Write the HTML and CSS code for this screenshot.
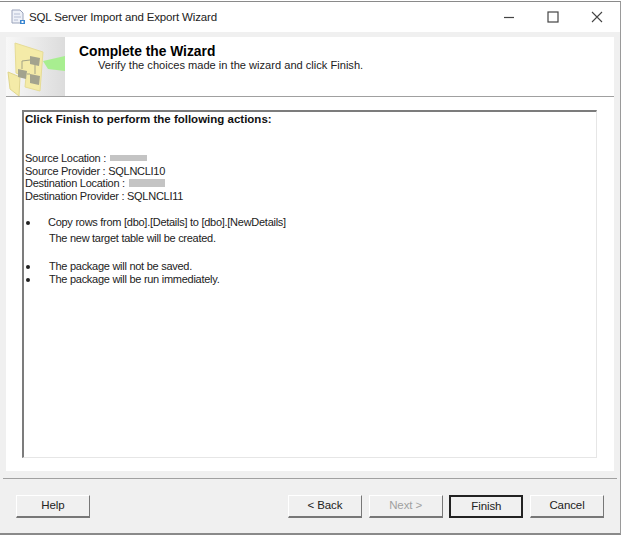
FILE: index.html
```html
<!DOCTYPE html>
<html lang="en">
<head>
<meta charset="utf-8">
<title>SQL Server Import and Export Wizard</title>
<link rel="stylesheet" href="styles.css">
</head>
<body>
<div class="window">
  <div class="titlebar">
    <svg class="app-icon" width="16" height="16" viewBox="0 0 16 16">
      <path d="M2 1h8l3 3v10H2z" fill="#eef1f8" stroke="#9aa3bb"/>
      <path d="M4 5h6M4 8h7M4 11h4" stroke="#b4bcd2"/>
      <rect x="10" y="11" width="5" height="4" fill="#3a86d0"/>
      <rect x="11.500" y="12" width="2" height="2" fill="#fff"/>
    </svg>
    <span class="title">SQL Server Import and Export Wizard</span>
    <div class="controls">
      <svg class="ctl" width="12" height="12" viewBox="0 0 12 12"><path d="M1 6.500h10" stroke="#444" stroke-width="1.200"/></svg>
      <svg class="ctl" width="12" height="12" viewBox="0 0 12 12"><rect x="1" y="1" width="10" height="10" fill="none" stroke="#444" stroke-width="1.200"/></svg>
      <svg class="ctl" width="12" height="12" viewBox="0 0 12 12"><path d="M1 1l10 10M11 1L1 11" stroke="#444" stroke-width="1.100"/></svg>
    </div>
  </div>
  <div class="panel">
    <div class="header">
      <div class="banner">
        <svg width="59" height="59" viewBox="0 0 59 59">
          <path d="M37 24l22-5v15l-17-2z" fill="#a8ee90"/>
          <path d="M9 6l28 9-3 39-15-4 1-10-10-4z" fill="#f4eba8" stroke="#e6dc96"/>
          <path d="M2 35l12 5-1 19-9-7z" fill="#f4eba8" stroke="#e0d68e"/>
          <path d="M16 32v-8l8-1M29 28v9M21 37h3" fill="none" stroke="#a3a386"/>
          <path d="M24 19l10 2-1 8-9-2z" fill="#a3a38e"/>
          <path d="M12 32l9 2-1 8-8-2z" fill="#a3a38e"/>
          <path d="M24 37l10 2-1 9-9-2z" fill="#a3a38e"/>
        </svg>
      </div>
      <div class="heading">
        <div class="heading-title">Complete the Wizard</div>
        <div class="heading-sub">Verify the choices made in the wizard and click Finish.</div>
      </div>
    </div>
    <div class="content">
      <div class="report">
        <div class="report-title">Click Finish to perform the following actions:</div>
        <div class="lines">
          <div>Source Location : <span class="redact r1"></span></div>
          <div>Source Provider : SQLNCLI10</div>
          <div>Destination Location : <span class="redact r2"></span></div>
          <div>Destination Provider : SQLNCLI11</div>
        </div>
        <div class="item first"><span class="bullet"></span><span class="copy">Copy rows from [dbo].[Details] to [dbo].[NewDetails]</span></div>
        <div class="note">The new target table will be created.</div>
        <div class="item gap"><span class="bullet"></span><span>The package will not be saved.</span></div>
        <div class="item"><span class="bullet"></span><span>The package will be run immediately.</span></div>
      </div>
    </div>
  </div>
  <div class="footer">
    <button class="btn">Help</button>
    <div class="nav">
      <button class="btn">&lt; Back</button>
      <button class="btn disabled">Next &gt;</button>
      <button class="btn primary">Finish</button>
      <button class="btn">Cancel</button>
    </div>
  </div>
</div>
</body>
</html>
```
FILE: styles.css
```css
* { box-sizing: border-box; }
html, body { margin: 0; padding: 0; }
body {
  width: 624px;
  height: 537px;
  background: #fff;
  font-family: "Liberation Sans", Arial, sans-serif;
  font-size: 12px;
  color: #111;
  overflow: hidden;
}
.window {
  width: 621px;
  height: 534px;
  margin-top: 1px;
  border-top: 1px solid #8a8a8a;
  border-right: 1px solid #9a9a9a;
  border-bottom: 2px solid #8a8a8a;
  background: #f0f0f0;
  display: flex;
  flex-direction: column;
}
.titlebar {
  height: 30px;
  flex: none;
  background: #fff;
  display: flex;
  align-items: center;
  padding-left: 10px;
}
.app-icon { margin-right: 3px; }
.title { font-size: 11.500px; letter-spacing: -.15px; color: #222; }
.controls {
  margin-left: auto;
  display: flex;
  align-items: center;
  gap: 32px;
  padding-right: 17px;
  margin-top: -1px;
}
.panel {
  margin: 5px 6px 0;
  width: 608px;
  height: 434px;
  background: #fff;
  flex: none;
  display: flex;
  flex-direction: column;
}
.header {
  height: 60px;
  flex: none;
  display: flex;
  border-bottom: 1px solid #a0a0a0;
}
.banner {
  width: 59px;
  height: 59px;
  background: linear-gradient(90deg, #f8f8f8, #dcdcdc);
}
.banner svg { display: block; }
.heading { padding: 7px 0 0 14px; }
.heading-title { font-size: 13.800px; font-weight: 700; line-height: 15px; color: #000; }
.heading-sub { font-size: 11.100px; line-height: 13px; padding-left: 19px; color: #222; }
.content { padding: 13px 17px 13px 16px; flex: 1; display: flex; }
.report {
  flex: 1;
  border-top: 2px solid #7c7c7c;
  border-left: 2px solid #7c7c7c;
  border-right: 1px solid #e6e6e6;
  border-bottom: 1px solid #e6e6e6;
  padding: 0 0 0 1px;
  font-size: 11px;
  letter-spacing: -.27px;
  color: #222;
}
.report-title { font-size: 11.500px; letter-spacing: 0; font-weight: 700; line-height: 14px; color: #111; }
.lines { margin-top: 26px; line-height: 13px; }
.lines > div { height: 12.700px; }
.redact {
  display: inline-block;
  height: 6px;
  background: #c4c4c4;
  vertical-align: 1px;
}
.r1 { width: 37px; margin-left: 1px; }
.r2 { width: 36px; height: 8px; margin-left: 1px; vertical-align: 0; }
.item { display: flex; line-height: 13px; }
.first { margin-top: 13px; }
.bullet { width: 24px; flex: none; }
.bullet::before {
  content: "";
  display: block;
  width: 4px;
  height: 4px;
  margin: 5px 0 0 1px;
  border-radius: 50%;
  background: #222;
}
.copy { margin-left: -1px; }
.note { margin: 3px 0 0 24px; line-height: 13px; }
.gap { margin-top: 15px; }
.footer {
  flex: 1;
  margin: 7px 3px 0;
  border-top: 1px solid #a0a0a0;
  padding: 16px 13px 0 13px;
  display: flex;
  justify-content: space-between;
  align-items: flex-start;
}
.nav { display: flex; gap: 6.700px; }
.btn {
  width: 74px;
  height: 23px;
  padding: 0 0 2px;
  background: #f0f0f0;
  border: 1px solid #fff;
  border-right-color: #777;
  border-bottom: 2px solid #777;
  font-family: "Liberation Sans", Arial, sans-serif;
  font-size: 11.500px;
  letter-spacing: -.1px;
  color: #222;
}
.disabled { color: #a0a0a0; }
.primary { border: 2px solid #222; }
```
